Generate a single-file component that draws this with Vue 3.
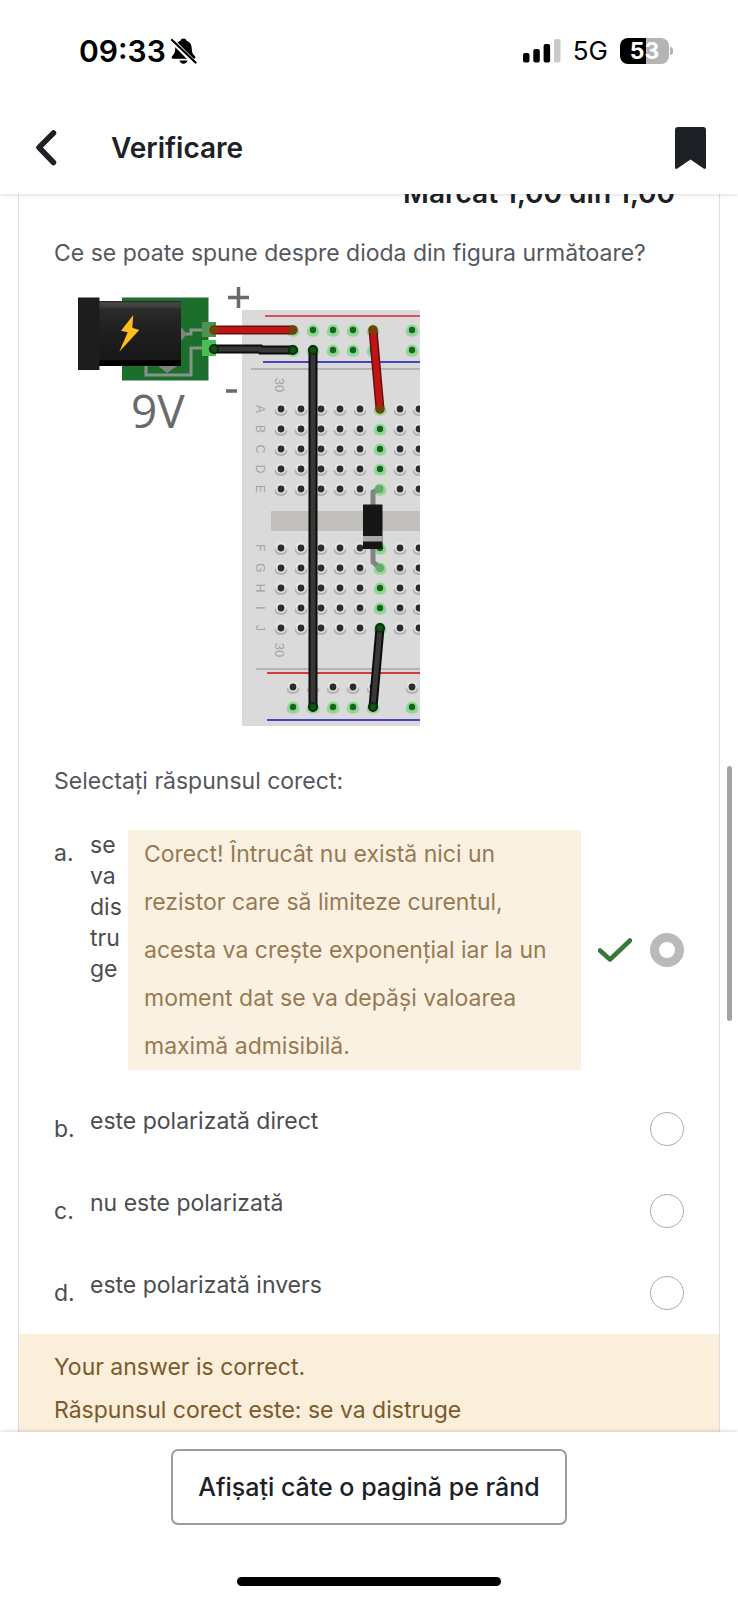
<script setup>
import { ref } from 'vue'

const selected = ref('a')

const options = [
  {
    id: 'a',
    text: 'se va distruge',
    feedback:
      'Corect! Întrucât nu există nici un rezistor care să limiteze curentul, acesta va crește exponențial iar la un moment dat se va depăși valoarea maximă admisibilă.'
  },
  { id: 'b', text: 'este polarizată direct' },
  { id: 'c', text: 'nu este polarizată' },
  { id: 'd', text: 'este polarizată invers' }
]

const rows = [
  { name: 'A', y: 409 },
  { name: 'B', y: 429 },
  { name: 'C', y: 449 },
  { name: 'D', y: 469 },
  { name: 'E', y: 489 },
  { name: 'F', y: 548 },
  { name: 'G', y: 568 },
  { name: 'H', y: 588 },
  { name: 'I', y: 608 },
  { name: 'J', y: 628 }
]
const columns = [281, 301, 321, 340, 360, 380, 400, 419]
const railColumns = [293, 313, 333, 353, 373, 412]
const rails = [
  { y: 330, live: true },
  { y: 350, live: true },
  { y: 687, live: false },
  { y: 707, live: true }
]

const holes = [
  ...rows.flatMap((r) => columns.map((x) => ({ x, y: r.y, live: x === 380 }))),
  ...rails.flatMap((r) => railColumns.map((x) => ({ x, y: r.y, live: r.live })))
]
</script>

<template>
  <div class="screen">
    <header class="top">
      <div class="status">
        <div class="status-left">
          <span class="time">09:33</span>
          <svg class="bell" viewBox="0 0 26 26" width="26" height="26" aria-hidden="true">
            <path d="M12.500.6c-1.600 0-2.700.9-3 2.200C5.800 4 4.300 7 4.200 11c-.1 4-1.300 5.300-2.900 7-.9 1-1 2.700.8 2.700h20.800c1.800 0 1.700-1.700.8-2.700-1.600-1.700-2.800-3-2.900-7-.1-4-1.600-7-5.300-8.200-.3-1.300-1.400-2.200-3-2.200z" />
            <path d="M8.500 22.500h8c-.3 2-1.900 3.200-4 3.200s-3.700-1.200-4-3.200z" />
            <path d="M-1 0.500 25 26.500" stroke="#fff" stroke-width="5" />
            <path d="M1 2 24.500 24.500" stroke="#000" stroke-width="2.200" stroke-linecap="round" />
          </svg>
        </div>
        <div class="status-right">
          <svg viewBox="0 0 38 24" width="38" height="24" aria-hidden="true">
            <rect x="0" y="14" width="6.500" height="9.500" rx="2" />
            <rect x="10.300" y="10" width="6.500" height="13.500" rx="2" />
            <rect x="20.600" y="5" width="6.500" height="18.500" rx="2" />
            <rect x="31" y="0" width="6.500" height="23.500" rx="2" fill="#c9c9c9" />
          </svg>
          <span class="network">5G</span>
          <div class="battery"><span class="level">53</span><i class="nub"></i></div>
        </div>
      </div>
      <nav class="bar">
        <button class="icon-button" type="button" aria-label="Înapoi">
          <svg viewBox="0 0 22 36" width="22" height="36" fill="none" aria-hidden="true">
            <path d="M18.500 3 4 17.500 18.500 32.500" stroke="#1d2125" stroke-width="5.500" stroke-linecap="round" stroke-linejoin="round" />
          </svg>
        </button>
        <h1 class="title">Verificare</h1>
        <button class="icon-button" type="button" aria-label="Marcaj">
          <svg viewBox="0 0 31 42" width="31" height="42" aria-hidden="true">
            <path d="M3 0h25a3 3 0 0 1 3 3v37.500c0 1.300-1.200 1.900-2.400 1.100L15.500 32.500 2.400 41.600C1.200 42.400 0 41.800 0 40.500V3A3 3 0 0 1 3 0z" fill="#1d2125" />
          </svg>
        </button>
      </nav>
    </header>

    <main class="scroll">
      <section class="card">
        <p class="mark">Marcat 1,00 din 1,00</p>
        <p class="question">Ce se poate spune despre dioda din figura următoare?</p>

        <svg class="figure" viewBox="54 280 376 460" width="376" height="460" role="img" aria-label="Circuit cu diodă">
          <defs>
            <linearGradient id="barrel" x1="0" y1="0" x2="0" y2="1">
              <stop offset="0" stop-color="#222" />
              <stop offset="0.030" stop-color="#484848" />
              <stop offset="0.100" stop-color="#3a3a3a" />
              <stop offset="0.120" stop-color="#2b2b2b" />
              <stop offset="0.500" stop-color="#1e1e1e" />
              <stop offset="0.900" stop-color="#171717" />
              <stop offset="0.920" stop-color="#000" />
              <stop offset="1" stop-color="#000" />
            </linearGradient>
            <clipPath id="board"><rect x="242" y="310" width="178" height="416" /></clipPath>
          </defs>

          <g clip-path="url(#board)">
            <rect x="242" y="310" width="178" height="416" fill="#dadada" />
            <rect x="271" y="511" width="149" height="20" fill="#c0bfbc" />
            <g fill="none" stroke-width="2">
              <path d="M265 316H420" stroke="#d4555a" />
              <path d="M263 362H420" stroke="#4444c8" />
              <path d="M251 369H420M256 669H420" stroke="#a8a8a8" stroke-width="1.300" />
              <path d="M267 673H420" stroke="#d63b40" />
              <path d="M267 720H420" stroke="#4a44bd" />
            </g>
            <g v-for="(h, i) in holes" :key="i">
              <template v-if="h.live">
                <ellipse :cx="h.x" :cy="h.y + 2" rx="6.500" ry="4.800" fill="#a3cfa4" />
                <circle :cx="h.x" :cy="h.y" r="5.500" fill="#88dc8d" />
                <circle :cx="h.x" :cy="h.y" r="3.200" fill="#1a6421" />
              </template>
              <template v-else>
                <ellipse :cx="h.x" :cy="h.y + 2.500" rx="6.300" ry="4.500" fill="#b4b4b4" />
                <circle :cx="h.x" :cy="h.y - 0.500" r="5.200" fill="#e6e6e6" />
                <circle :cx="h.x" :cy="h.y" r="3.400" fill="#2c2c2c" />
              </template>
            </g>
            <g class="legend">
              <text v-for="r in rows" :key="r.name" :transform="`translate(256 ${r.y}) rotate(90)`">{{ r.name }}</text>
              <text class="number" transform="translate(275 385) rotate(90)">30</text>
              <text class="number" transform="translate(275 650) rotate(90)">30</text>
            </g>
          </g>

          <rect x="122" y="297.500" width="86.500" height="83" fill="#1b6e2c" />
          <g fill="none" stroke="#89938a" stroke-width="3">
            <path d="M181 334H191V330H203" />
            <path d="M146 364V375H191V348H203" />
          </g>
          <path d="M180 327Q184 329 186 334Q184 339 180 341zM158 366H177L167 373z" fill="#7d857e" />
          <rect x="99" y="301" width="82" height="65" fill="url(#barrel)" />
          <rect x="78" y="297.500" width="21.500" height="72.500" fill="#1d1d1d" />
          <path d="M133.300 315 121 330.700 127.700 332.300 119.300 351.700 139.300 330 132.300 327.700z" fill="#fbbf1d" />
          <rect x="202" y="322" width="14" height="15" fill="#4b9452" />
          <rect x="202" y="340" width="14" height="16" fill="#48bf50" />

          <g fill="none" stroke-linecap="round">
            <path d="M214 330H293M373 330 380 409" stroke="#66100c" stroke-width="9" />
            <path d="M214 330H293M373 330 380 409" stroke="#c21417" stroke-width="6" />
            <path d="M214 349H260L261 350H293M313 350V707M380 628 373 707" stroke="#0c0c0c" stroke-width="9" />
            <path d="M214 349H260L261 350H293M313 350V707M380 628 373 707" stroke="#383838" stroke-width="5" />
          </g>
          <g fill="#754009">
            <circle cx="214" cy="330" r="4.500" />
            <circle cx="293" cy="330" r="4.500" />
            <circle cx="373" cy="330" r="4.500" />
            <circle cx="380" cy="409" r="4.500" />
          </g>
          <g fill="#17521b" stroke="#06310a" stroke-width="2">
            <circle cx="214" cy="349" r="4" />
            <circle cx="293" cy="350" r="4" />
            <circle cx="313" cy="350" r="4" />
            <circle cx="313" cy="707" r="4" />
            <circle cx="380" cy="628" r="4" />
            <circle cx="373" cy="707" r="4" />
          </g>

          <g fill="none" stroke="#838383" stroke-width="5">
            <path d="M379 489 373 492V505M373 548V562L380 568" />
          </g>
          <g fill="#66a96c">
            <circle cx="379" cy="489" r="4" />
            <circle cx="380" cy="568" r="4" />
          </g>
          <rect x="363" y="504.500" width="19.500" height="44.500" fill="#161616" />
          <rect x="363" y="536" width="19.500" height="5.500" fill="#a9a9a9" />

          <g class="annotation">
            <text x="131" y="428" font-size="46">9V</text>
            <path d="M228 297.500H249M238.500 287V308M226 391H237" fill="none" stroke="#6a6a6a" stroke-width="3.500" />
          </g>
        </svg>

        <fieldset class="answers">
          <legend class="prompt">Selectați răspunsul corect:</legend>
          <div v-for="o in options" :key="o.id" class="option" :class="{ narrow: o.feedback }">
            <span class="letter">{{ o.id }}.</span>
            <label class="text" :for="'answer-' + o.id">{{ o.text }}</label>
            <p v-if="o.feedback" class="feedback">{{ o.feedback }}</p>
            <svg v-if="o.feedback" class="check" viewBox="0 0 34 24" width="34" height="24" fill="none" aria-hidden="true">
              <path d="M2 12.500 12 21.500 32 2.500" stroke="#357a38" stroke-width="4.500" stroke-linecap="round" stroke-linejoin="round" />
            </svg>
            <input :id="'answer-' + o.id" v-model="selected" class="radio" type="radio" name="answer" :value="o.id" />
          </div>
        </fieldset>

        <div class="result">
          <p>Your answer is correct.</p>
          <p>Răspunsul corect este: se va distruge</p>
        </div>
      </section>
      <div class="thumb"></div>
    </main>

    <footer class="bottom">
      <button class="paging" type="button"><span>Afișați câte o pagină pe rând</span></button>
      <div class="home"></div>
    </footer>
  </div>
</template>

<style>
html,
body {
  background: #fff;
}
</style>

<style scoped>
.screen {
  display: flex;
  flex-direction: column;
  height: 100vh;
  overflow: hidden;
  background: #fff;
  color: #1d2125;
  font-family: Inter, "Liberation Sans", sans-serif;
  font-size: 23px;
}

p,
h1 {
  margin: 0;
}

button {
  font: inherit;
  color: inherit;
  cursor: pointer;
}

.top {
  position: relative;
  z-index: 1;
  flex: none;
  background: #fff;
  box-shadow: 0 0 5px rgba(0, 0, 0, 0.2);
}

.status {
  display: flex;
  align-items: center;
  justify-content: space-between;
  height: 101px;
  padding: 0 69px 0 79px;
  color: #000;
}

.status-left,
.status-right {
  display: flex;
  align-items: center;
}

.status-left {
  gap: 5px;
}

.status-right {
  gap: 12px;
}

.time {
  font-size: 30px;
  font-weight: 600;
}

.network {
  font-size: 26px;
}

.battery {
  position: relative;
  display: flex;
  align-items: center;
  justify-content: center;
  width: 49px;
  height: 26px;
  border-radius: 8px;
  background: linear-gradient(to right, #000 53%, #b4b4b4 53%);
}

.level {
  color: #fff;
  font-size: 23px;
  font-weight: 700;
}

.nub {
  position: absolute;
  left: 50px;
  top: 9px;
  width: 3px;
  height: 8px;
  border-radius: 0 4px 4px 0;
  background: #b4b4b4;
}

.bar {
  display: flex;
  align-items: center;
  height: 93px;
  padding: 0 32px 0 35px;
}

.icon-button {
  display: flex;
  padding: 0;
  border: 0;
  background: none;
}

.title {
  flex: 1;
  padding-left: 54px;
  font-size: 28px;
  font-weight: 600;
}

.scroll {
  position: relative;
  flex: 1;
  min-height: 0;
  overflow: hidden;
}

.card {
  margin: -18px 18px 0;
  border: 1px solid #dcdee1;
  border-width: 0 1px;
}

.mark {
  padding: 0 44px 0 35px;
  font-size: 28px;
  font-weight: 600;
  line-height: 34px;
  text-align: right;
}

.question,
.prompt {
  color: #54585d;
  line-height: 36px;
}

.question {
  padding: 25px 35px 0;
}

.figure {
  display: block;
  max-width: 100%;
  margin: 9px 35px 0;
}

.legend text {
  fill: #a3a3a3;
  font-family: "Liberation Sans", sans-serif;
  font-size: 12px;
  text-anchor: middle;
}

.legend .number {
  font-size: 13px;
}

.annotation text {
  fill: #6a6a6a;
  font-family: "Open Sans", "Noto Sans", sans-serif;
}

.answers {
  min-width: 0;
  margin: 0;
  padding: 0 35px;
  border: 0;
}

.prompt {
  padding: 23px 0 13px;
}

.option {
  display: flex;
  align-items: flex-start;
  padding: 18px 0;
  color: #4c4d50;
}

.letter {
  flex: none;
  width: 36px;
  line-height: 46px;
}

.text {
  flex: 1;
  line-height: 31px;
}

.narrow .text {
  flex: 0 0 38px;
  word-break: break-all;
}

.feedback {
  flex: 1;
  padding: 0 16px;
  background: #fbf1e3;
  color: #967a52;
  line-height: 48px;
}

.check {
  flex: none;
  align-self: center;
  margin: 0 18px 0 17px;
}

.radio {
  flex: none;
  align-self: center;
  appearance: none;
  width: 34px;
  height: 34px;
  margin: 0;
  border: 1px solid #adadad;
  border-radius: 50%;
  background: #fff;
}

.radio:checked {
  border-width: 9px;
  border-color: #bababa;
}

.result {
  padding: 12px 35px;
  background: #fbeedb;
  color: #7b5a2b;
  line-height: 43px;
}

.thumb {
  position: absolute;
  top: 572px;
  right: 6px;
  width: 5px;
  height: 255px;
  border-radius: 3px;
  background: #a4a4a4;
}

.bottom {
  position: relative;
  z-index: 1;
  display: flex;
  flex: none;
  flex-direction: column;
  align-items: center;
  gap: 52px;
  padding: 17px 0 14px;
  background: #fff;
  box-shadow: 0 0 5px rgba(0, 0, 0, 0.2);
}

.paging {
  display: flex;
  align-items: center;
  height: 76px;
  padding: 0 25px;
  border: 2px solid #9a9ca0;
  border-radius: 7px;
  background: #fff;
  font-size: 25px;
  font-weight: 500;
}

.paging span {
  overflow: hidden;
  line-height: 26px;
  white-space: nowrap;
}

.home {
  width: 264px;
  height: 9px;
  border-radius: 5px;
  background: #000;
}
</style>
